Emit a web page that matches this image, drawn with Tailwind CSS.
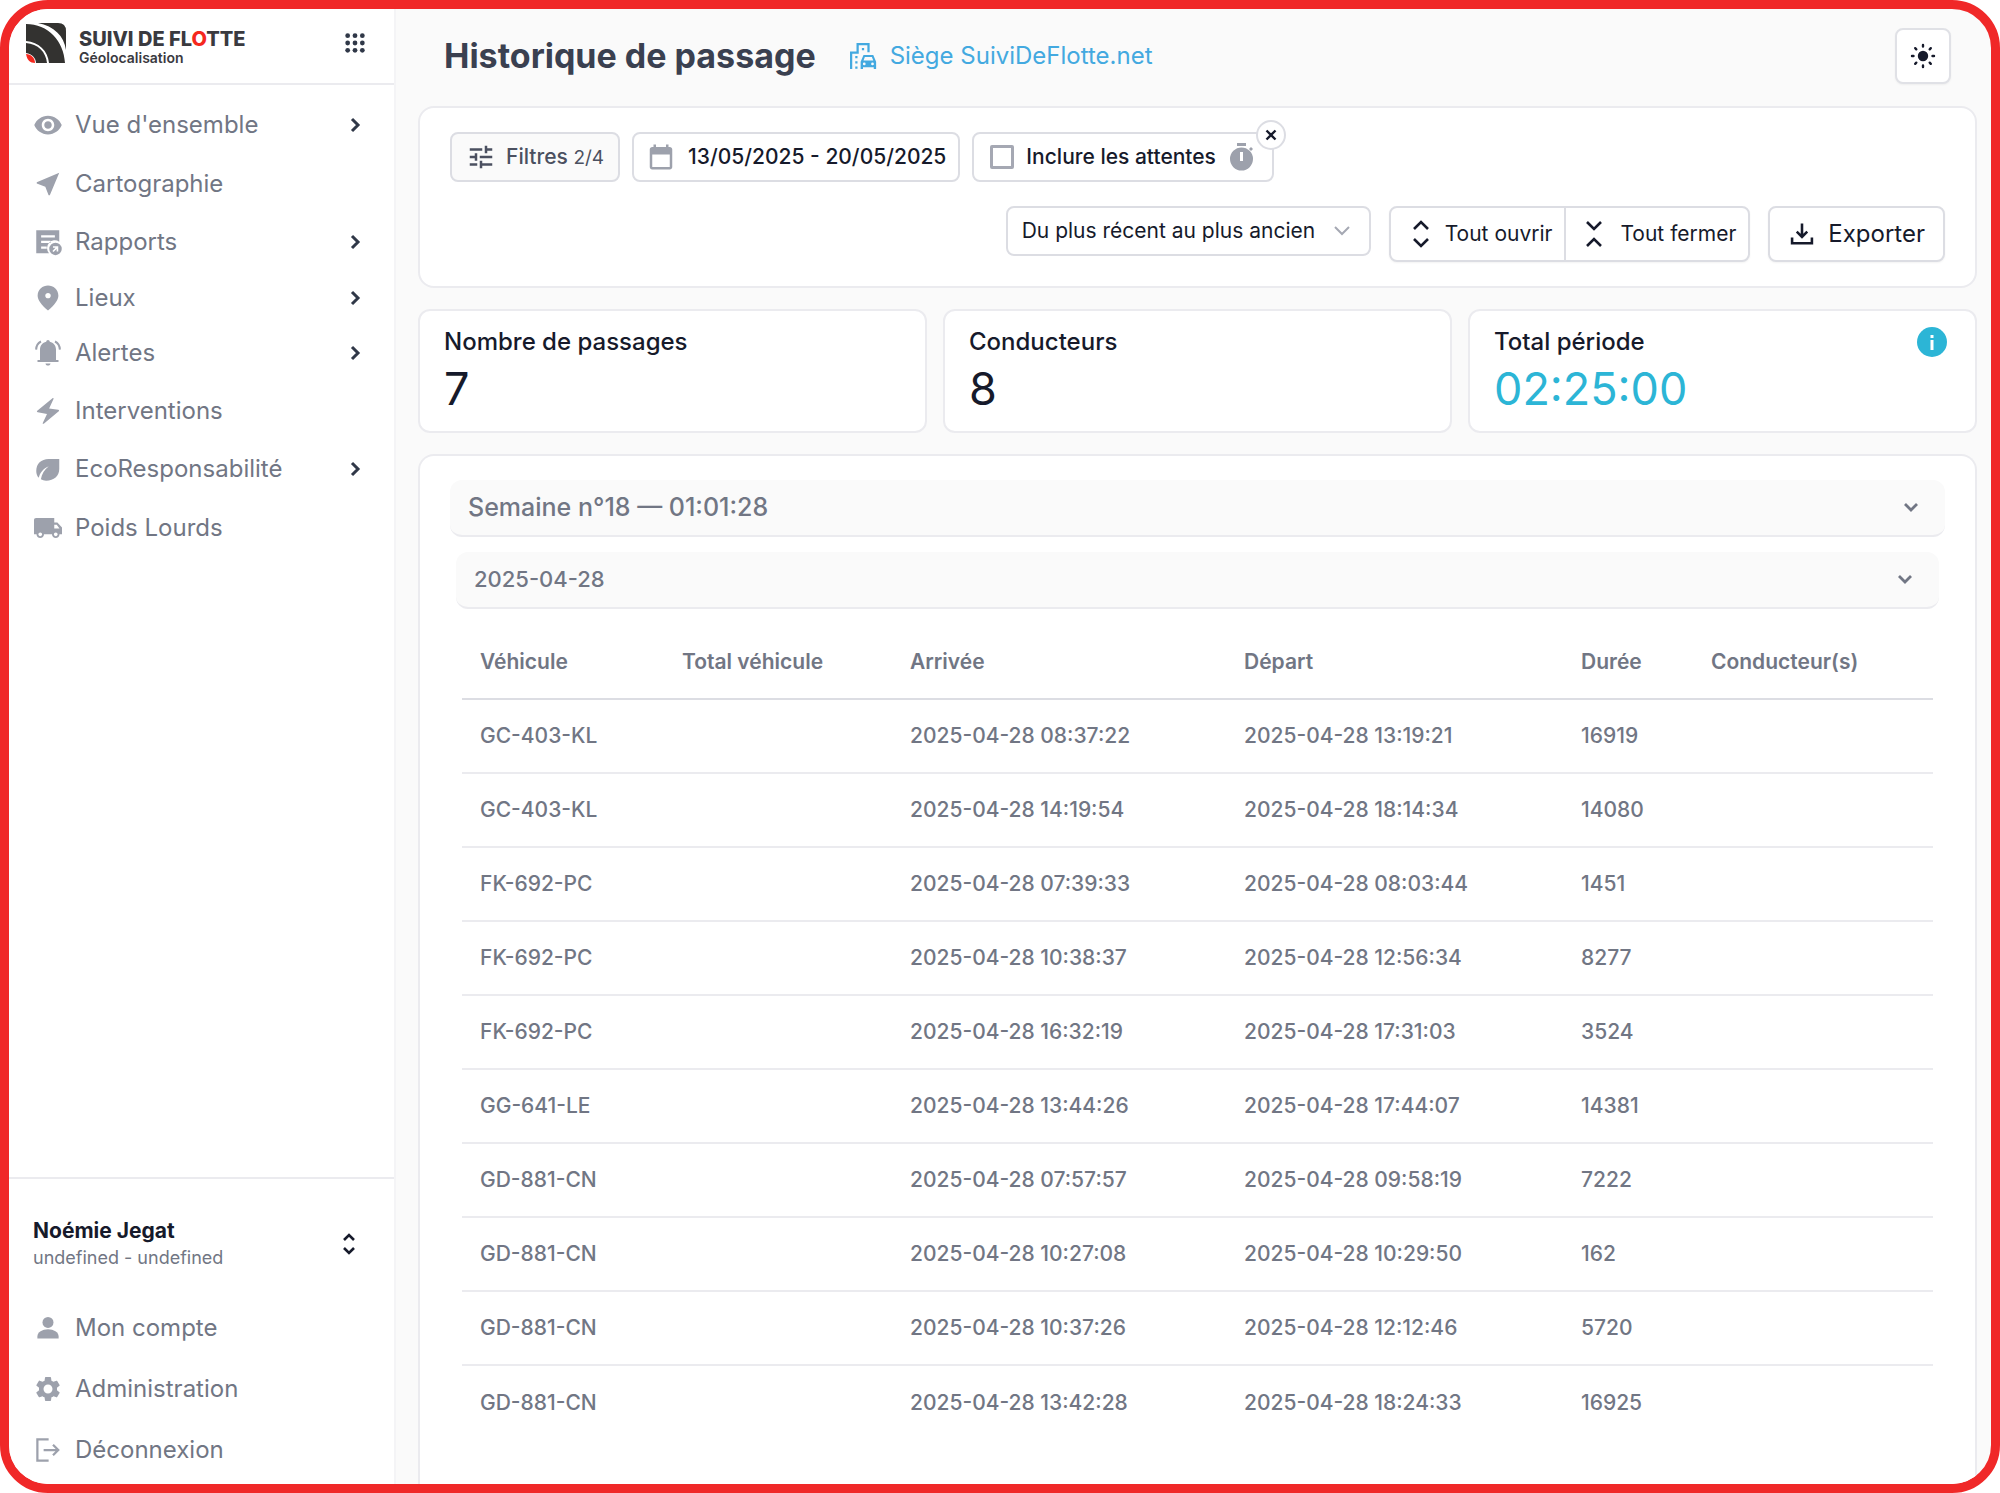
<!DOCTYPE html>
<html lang="fr">
<head>
    <meta charset="UTF-8">
    <meta name="viewport" content="width=device-width, initial-scale=1.0">
    <title>Historique de passage | Suivi de Flotte</title>
    <script src="https://cdn.jsdelivr.net/npm/@tailwindcss/browser@4"></script>
</head>
<body class="h-screen bg-white font-['Inter',sans-serif] text-[#161a2b]">

    <div class="flex h-full overflow-hidden rounded-[48px] border-[9px] border-[#f02828] bg-[#fafafa]">

        <!-- Menu latéral -->
        <aside class="flex w-[387px] shrink-0 flex-col border-r-2 border-[#f4f4f6] bg-white">
            <div class="flex h-[76px] shrink-0 items-center justify-between border-b-2 border-[#ebebef] pb-1.5 pl-4 pr-7">
                <a href="#" class="flex items-center gap-3">
                    <svg class="size-[42px]" viewBox="0 0 42 42">
                        <path d="M13 1h20q8 0 8 8v19C39 14 29 4 13 1z" fill="#333230"/>
                        <path d="M1 2c22 0 38 17 39 39H24C23 29 14 20 1 19z" fill="#333230"/>
                        <path d="M1 21c12 1 20 9 21 20H11C11 36 7 32 1 31z" fill="#333230"/>
                        <path d="M1 32c5 0 9 4 9 9-5 0-8-3-9-9z" fill="#f5281e"/>
                    </svg>
                    <span class="flex flex-col pt-2.5">
                        <span class="text-[20px] font-extrabold leading-[20px] text-[#3a3a3f]">SUIVI DE FL<span class="text-[#f5281e]">O</span>TTE</span>
                        <span class="text-[14px] font-semibold leading-[18px] text-[#3a3a3f]">Géolocalisation</span>
                    </span>
                </a>
                <button type="button" aria-label="Applications">
                    <svg class="size-[22px] text-[#303848]" viewBox="0 0 24 24" fill="currentColor">
                        <circle cx="4" cy="4" r="2.6"/><circle cx="12" cy="4" r="2.6"/><circle cx="20" cy="4" r="2.6"/>
                        <circle cx="4" cy="12" r="2.6"/><circle cx="12" cy="12" r="2.6"/><circle cx="20" cy="12" r="2.6"/>
                        <circle cx="4" cy="20" r="2.6"/><circle cx="12" cy="20" r="2.6"/><circle cx="20" cy="20" r="2.6"/>
                    </svg>
                </button>
            </div>

            <nav class="flex flex-col pt-3 text-[24px] text-[#717684]">
                <a href="#" class="flex h-[56px] items-center gap-3 pl-6 pr-[30px]">
                    <svg class="size-[30px] text-[#9da1ac]" viewBox="0 0 24 24" fill="currentColor"><path d="M12 4.5C7 4.5 2.73 7.61 1 12c1.73 4.39 6 7.5 11 7.5s9.27-3.11 11-7.5c-1.73-4.39-6-7.5-11-7.5M12 17c-2.76 0-5-2.24-5-5s2.24-5 5-5 5 2.24 5 5-2.24 5-5 5m0-8c-1.66 0-3 1.34-3 3s1.34 3 3 3 3-1.34 3-3-1.34-3-3-3"/></svg>
                    <span class="grow">Vue d'ensemble</span>
                    <svg class="size-[18px] text-[#303848]" viewBox="0 0 18 18" fill="none" stroke="currentColor" stroke-width="3"><path d="M6 3l6 6-6 6"/></svg>
                </a>
                <a href="#" class="flex h-[61px] items-center gap-3 pl-6 pr-[30px]">
                    <svg class="size-[30px] text-[#9da1ac]" viewBox="0 0 24 24" fill="currentColor"><path d="M21 3 3 10.53v.98l6.84 2.65L12.48 21h.98z"/></svg>
                    <span class="grow">Cartographie</span>
                </a>
                <a href="#" class="flex h-[56px] items-center gap-3 pl-6 pr-[30px]">
                    <svg class="size-[30px] text-[#9da1ac]" viewBox="0 0 24 24" fill="currentColor">
                        <path fill-rule="evenodd" d="M2.6 2.5h18.4v9.3a6.2 6.2 0 0 0-8.2 9.2H2.6zM6.5 6.5v1.8h11V6.5zM6.5 11v1.8h7.5V11zM6.5 15.5v1.8H11v-1.8z"/>
                        <path fill-rule="evenodd" d="M18 12.5a5 5 0 1 0 0 10 5 5 0 0 0 0-10zM16 15.3h4.2v4.2h-1.3v-2l-2.5 2.5-.9-.9 2.5-2.5h-2z"/>
                    </svg>
                    <span class="grow">Rapports</span>
                    <svg class="size-[18px] text-[#303848]" viewBox="0 0 18 18" fill="none" stroke="currentColor" stroke-width="3"><path d="M6 3l6 6-6 6"/></svg>
                </a>
                <a href="#" class="flex h-[55px] items-center gap-3 pl-6 pr-[30px]">
                    <svg class="size-[30px] text-[#9da1ac]" viewBox="0 0 24 24" fill="currentColor"><path d="M12 2c-4.2 0-8.3 3.22-8.3 8.2 0 3.32 2.97 7.25 8.3 11.8 5.33-4.55 8.3-8.48 8.3-11.8C20.3 5.22 16.2 2 12 2m0 10.2c-1.2 0-2.2-.9-2.2-2.1s1-2.1 2.2-2.1 2.2.9 2.2 2.1-1 2.1-2.2 2.1"/></svg>
                    <span class="grow">Lieux</span>
                    <svg class="size-[18px] text-[#303848]" viewBox="0 0 18 18" fill="none" stroke="currentColor" stroke-width="3"><path d="M6 3l6 6-6 6"/></svg>
                </a>
                <a href="#" class="flex h-[55px] items-center gap-3 pl-6 pr-[30px]">
                    <svg class="size-[30px] text-[#9da1ac]" viewBox="0 0 24 24" fill="currentColor">
                        <path d="M12 1.5c.8 0 1.4.6 1.4 1.4 3 .6 5 3 5 6.3v8.3h2v1.7H3.6v-1.7h2V9.2c0-3.3 2-5.7 5-6.3 0-.8.6-1.4 1.4-1.4zM10 20.3h4c0 1-.9 1.7-2 1.7s-2-.7-2-1.7z"/>
                        <path d="M6.4 2.8C4 4 2.6 6.3 2.5 9.3M17.6 2.8c2.4 1.2 3.8 3.5 3.9 6.5" fill="none" stroke="currentColor" stroke-width="1.6"/>
                    </svg>
                    <span class="grow">Alertes</span>
                    <svg class="size-[18px] text-[#303848]" viewBox="0 0 18 18" fill="none" stroke="currentColor" stroke-width="3"><path d="M6 3l6 6-6 6"/></svg>
                </a>
                <a href="#" class="flex h-[61px] items-center gap-3 pl-6 pr-[30px]">
                    <svg class="size-[30px] text-[#9da1ac]" viewBox="0 0 24 24" fill="currentColor"><path d="M15.6 1.7 3.4 11.700c-.5.5-.3 1.1.4 1.3l7.4 1.3-3.400 7.2c-.2.6.3 1 .8.6l12-9.900c.5-.5.3-1.1-.4-1.3l-7.3-.9 3.5-7.700c.2-.6-.3-1-.8-.6z"/></svg>
                    <span class="grow">Interventions</span>
                </a>
                <a href="#" class="flex h-[56px] items-center gap-3 pl-6 pr-[30px]">
                    <svg class="size-[30px] text-[#9da1ac]" viewBox="0 0 24 24" fill="currentColor"><path d="M21 4h-8.5C6.5 4 2.6 8 2.6 13.5c0 2.2.7 4.2 2 5.5 1-4.3 3.6-7.5 8-9.3-3.5 2.8-5.6 6.2-6.3 10.5 1.2.7 2.6 1.1 4.2 1.1C16.8 21.3 21 17.6 21 12z"/></svg>
                    <span class="grow">EcoResponsabilité</span>
                    <svg class="size-[18px] text-[#303848]" viewBox="0 0 18 18" fill="none" stroke="currentColor" stroke-width="3"><path d="M6 3l6 6-6 6"/></svg>
                </a>
                <a href="#" class="flex h-[61px] items-center gap-3 pl-6 pr-[30px]">
                    <svg class="size-[30px] text-[#9da1ac]" viewBox="0 0 24 24" fill="currentColor"><path d="M19.5 7.5H17V4H2.5C1.4 4 .8 4.6.8 5.7V17h2c0 1.66 1.34 3 3 3s3-1.34 3-3h6.4c0 1.66 1.34 3 3 3s3-1.34 3-3h2v-5.5zM5.8 18.5c-.83 0-1.5-.67-1.5-1.5s.67-1.5 1.5-1.5 1.5.67 1.5 1.5-.67 1.5-1.5 1.5M19 9.3l2.2 3H17v-3zm-.8 9.2c-.83 0-1.5-.67-1.5-1.5s.67-1.5 1.5-1.5 1.5.67 1.5 1.5-.67 1.5-1.5 1.5"/></svg>
                    <span class="grow">Poids Lourds</span>
                </a>
            </nav>

            <!-- Compte utilisateur -->
            <div class="mt-auto border-t-2 border-[#ebebef] pb-1 pt-[38px]">
                <button type="button" class="flex w-full items-center justify-between pl-6 pr-9 text-left">
                    <span class="flex flex-col">
                        <span class="text-[21px] font-bold leading-[28px]">Noémie Jegat</span>
                        <span class="text-[18px] leading-[26px] text-[#717684]">undefined - undefined</span>
                    </span>
                    <svg class="h-[24px] w-[18px]" viewBox="0 0 18 24" fill="none" stroke="currentColor" stroke-width="2.6"><path d="M4 8l5-5 5 5M4 16l5 5 5-5"/></svg>
                </button>
                <nav class="flex flex-col pt-[26px] text-[24px] text-[#717684]">
                    <a href="#" class="flex h-[61px] items-center gap-3 pl-6 pr-[30px]">
                        <svg class="size-[30px] text-[#9da1ac]" viewBox="0 0 24 24" fill="currentColor"><circle cx="12" cy="7.5" r="4.4"/><path d="M3.5 20.3v-1.6c0-3.2 4-5.7 8.5-5.7s8.5 2.5 8.5 5.7v1.6z"/></svg>
                        <span>Mon compte</span>
                    </a>
                    <a href="#" class="flex h-[61px] items-center gap-3 pl-6 pr-[30px]">
                        <svg class="size-[30px] text-[#9da1ac]" viewBox="0 0 24 24" fill="currentColor"><path d="M19.14 12.94c.04-.3.06-.61.06-.94 0-.32-.02-.64-.07-.94l2.03-1.58c.18-.14.23-.41.12-.61l-1.92-3.32c-.12-.22-.37-.29-.59-.22l-2.39.96c-.5-.38-1.03-.7-1.62-.94l-.36-2.54c-.04-.24-.24-.41-.48-.41h-3.84c-.24 0-.43.17-.47.41l-.36 2.54c-.59.24-1.13.57-1.62.94l-2.39-.96c-.22-.08-.47 0-.59.22L2.74 8.87c-.12.21-.08.47.12.61l2.03 1.58c-.05.3-.09.63-.09.94s.02.64.07.94l-2.03 1.58c-.18.14-.23.41-.12.61l1.92 3.32c.12.22.37.29.59.22l2.39-.96c.5.38 1.03.7 1.62.94l.36 2.54c.05.24.24.41.48.41h3.84c.24 0 .44-.17.47-.41l.36-2.54c.59-.24 1.13-.56 1.62-.94l2.39.96c.22.08.47 0 .59-.22l1.92-3.32c.12-.22.07-.47-.12-.61zM12 15.6c-1.98 0-3.6-1.62-3.6-3.6s1.62-3.6 3.6-3.6 3.6 1.62 3.6 3.6-1.62 3.6-3.6 3.6"/></svg>
                        <span>Administration</span>
                    </a>
                    <a href="#" class="flex h-[61px] items-center gap-3 pl-6 pr-[30px]">
                        <svg class="size-[30px] text-[#9da1ac]" viewBox="0 0 24 24" fill="none" stroke="currentColor" stroke-width="1.8"><path d="M12.5 3.5h-9v17h9M8.5 12H20M16 7.8l4.2 4.2-4.2 4.2"/></svg>
                        <span>Déconnexion</span>
                    </a>
                </nav>
            </div>
        </aside>

        <main class="flex min-w-0 grow flex-col pl-[22px] pr-3.5">
            <header class="flex h-[97px] shrink-0 items-center justify-between px-[26px] pb-1">
                <div class="flex items-center gap-8">
                    <h1 class="text-[34px] font-bold text-[#3a4050]">Historique de passage</h1>
                    <a href="#" class="flex items-center gap-3 text-[24px] text-[#43a9e0]">
                        <svg class="size-[30px]" viewBox="0 0 24 24" fill="currentColor">
                            <path d="M2.5 22.4V9.2h5.2V2.5h8.7V9" fill="none" stroke="currentColor" stroke-width="1.8"/>
                            <path d="M11.1 5.5h1.8v1.8h-1.8zM5.8 12h1.8v1.8H5.8zM5.8 16.2h1.8V18H5.8zM5.8 20.4h1.8v1.8H5.8z"/>
                            <path fill-rule="evenodd" d="M12.4 11.2h7.8l2.3 5.3v5.9h-1.9v-1.5H12v1.5h-1.9v-5.9zM13.5 12.8l-1.1 2.7h7.8l-1.1-2.7zM13 17.2a1.1 1.1 0 1 0 0 2.2 1.1 1.1 0 0 0 0-2.2zM19.6 17.2a1.1 1.1 0 1 0 0 2.2 1.1 1.1 0 0 0 0-2.2z"/>
                        </svg>
                        Siège SuiviDeFlotte.net
                    </a>
                </div>
                <button type="button" aria-label="Thème clair" class="flex size-[56px] items-center justify-center rounded-lg border-2 border-[#e0e1e6] bg-white shadow-xs">
                    <svg class="size-[26px]" viewBox="0 0 26 26" fill="currentColor" stroke="currentColor" stroke-width="2.4" stroke-linecap="round">
                        <circle cx="13" cy="13" r="4"/>
                        <path d="M13 2v1.5M13 22.5V24M2 13h1.5M22.5 13H24M5.2 5.2l1.1 1.1M19.7 19.7l1.1 1.1M5.2 20.8l1.1-1.1M19.7 6.3l1.1-1.1"/>
                    </svg>
                </button>
            </header>

            <!-- Filtres -->
            <section class="flex shrink-0 flex-col gap-6 rounded-2xl border-2 border-[#ebebef] bg-white px-[30px] py-6">
                <div class="flex gap-3">
                    <button type="button" class="flex h-[50px] items-center gap-2.5 rounded-lg border-2 border-[#dcdde3] bg-[#fafafa] px-3.5 text-[21px] font-medium text-[#4b5060]">
                        <svg class="size-[30px]" viewBox="0 0 24 24" fill="currentColor"><path d="M3 17v2h6v-2zM3 5v2h10V5zm10 16v-2h8v-2h-8v-2h-2v6zM7 9v2H3v2h4v2h2V9zm14 4v-2H11v2zm-6-4h2V7h4V5h-4V3h-2z"/></svg>
                        <span>Filtres <span class="text-[19px] font-normal">2/4</span></span>
                    </button>
                    <button type="button" class="flex h-[50px] items-center gap-3 rounded-lg border-2 border-[#dcdde3] bg-white px-3 text-[21px] font-medium">
                        <svg class="size-[30px] text-[#9da1ac]" viewBox="0 0 24 24" fill="currentColor"><path d="M19 4h-1V2h-2v2H8V2H6v2H5c-1.11 0-2 .9-2 2v14c0 1.1.89 2 2 2h14c1.1 0 2-.9 2-2V6c0-1.1-.9-2-2-2m0 16H5V10h14z"/></svg>
                        13/05/2025 - 20/05/2025
                    </button>
                    <div class="relative flex h-[50px] items-center gap-3 rounded-lg border-2 border-[#dcdde3] bg-white px-4 text-[21px] font-medium">
                        <input id="attentes" type="checkbox" class="size-[24px] appearance-none rounded-xs border-[3px] border-[#a5a8b3] bg-white">
                        <label for="attentes">Inclure les attentes</label>
                        <svg class="size-[28px] text-[#9da1ac]" viewBox="0 0 28 28" fill="currentColor"><path fill-rule="evenodd" d="M9 0h9v3H9zM13.5 4.5a11.5 11.5 0 1 0 0 23 11.5 11.5 0 0 0 0-23zM12 9h3v9h-3zM21 6l2-2 2 2-2 2z"/></svg>
                        <button type="button" aria-label="Retirer le filtre" class="absolute -right-3.5 -top-3.5 flex size-[30px] items-center justify-center rounded-full border-2 border-[#dcdde3] bg-white">
                            <svg class="size-[12px]" viewBox="0 0 12 12" fill="none" stroke="currentColor" stroke-width="2.4"><path d="M1.5 1.5l9 9M10.5 1.5l-9 9"/></svg>
                        </button>
                    </div>
                </div>
                <div class="flex items-start justify-end gap-[18px]">
                    <div class="relative">
                        <select aria-label="Tri" class="h-[50px] w-[365px] appearance-none rounded-lg border-2 border-[#dcdde3] bg-white pl-3.5 pr-12 text-[21px]">
                            <option>Du plus récent au plus ancien</option>
                            <option>Du plus ancien au plus récent</option>
                        </select>
                        <svg class="pointer-events-none absolute right-5 top-4 size-[18px] text-[#a5a8b3]" viewBox="0 0 18 18" fill="none" stroke="currentColor" stroke-width="2"><path d="M2 5l7 7 7-7"/></svg>
                    </div>
                    <div class="flex h-[56px] rounded-lg border-2 border-[#dcdde3] bg-white text-[21px] shadow-xs">
                        <button type="button" class="flex items-center gap-2.5 border-r-2 border-[#dcdde3] pl-4 pr-3">
                            <svg class="size-[28px]" viewBox="0 0 28 28" fill="none" stroke="currentColor" stroke-width="2.6"><path d="M7 9l7-7 7 7M7 19l7 7 7-7"/></svg>
                            Tout ouvrir
                        </button>
                        <button type="button" class="flex items-center gap-3 pl-3.5 pr-3">
                            <svg class="size-[28px]" viewBox="0 0 28 28" fill="none" stroke="currentColor" stroke-width="2.6"><path d="M7 2l7 7 7-7M7 26l7-7 7 7"/></svg>
                            Tout fermer
                        </button>
                    </div>
                    <button type="button" class="flex h-[56px] items-center gap-3 rounded-lg border-2 border-[#dcdde3] bg-white px-[18px] text-[24px] shadow-xs">
                        <svg class="size-[28px]" viewBox="0 0 24 24" fill="none" stroke="currentColor" stroke-width="2.2"><path d="M12 3v11M7.5 10l4.5 4.5 4.5-4.5M3.5 15v5h17v-5"/></svg>
                        Exporter
                    </button>
                </div>
            </section>

            <!-- Indicateurs -->
            <section class="mt-[21px] grid shrink-0 grid-cols-3 gap-4">
                <div class="h-[124px] rounded-xl border-2 border-[#ebebef] bg-white px-6 py-4">
                    <h2 class="text-[24px] font-medium leading-[30px]">Nombre de passages</h2>
                    <p class="text-[45px] leading-[64px]">7</p>
                </div>
                <div class="h-[124px] rounded-xl border-2 border-[#ebebef] bg-white px-6 py-4">
                    <h2 class="text-[24px] font-medium leading-[30px]">Conducteurs</h2>
                    <p class="text-[45px] leading-[64px]">8</p>
                </div>
                <div class="flex h-[124px] items-start justify-between rounded-xl border-2 border-[#ebebef] bg-white py-4 pl-6 pr-7">
                    <div>
                        <h2 class="text-[24px] font-medium leading-[30px]">Total période</h2>
                        <p class="text-[45px] leading-[64px] text-[#2cb5d6]">02:25:00</p>
                    </div>
                    <button type="button" aria-label="Informations">
                        <svg class="size-[30px]" viewBox="0 0 30 30"><circle cx="15" cy="15" r="15" fill="#2cb5d6"/><path d="M13.5 8h3v3h-3zM13.5 13h3v10h-3z" fill="#fff"/></svg>
                    </button>
                </div>
            </section>

            <!-- Passages par semaine et par jour -->
            <section class="mt-[21px] grow rounded-t-2xl border-2 border-b-0 border-[#ebebef] bg-white px-[30px] pt-6">
                <button type="button" class="flex h-[57px] w-full items-center justify-between rounded-xl border-b-2 border-[#ebebef] bg-[#fafafa] pl-[18px] pr-6 text-[25px] font-medium text-[#717684]">
                    Semaine n°18 — 01:01:28
                    <svg class="size-[18px]" viewBox="0 0 18 18" fill="none" stroke="currentColor" stroke-width="2.8"><path d="M2 5l6 6 6-6"/></svg>
                </button>
                <div class="px-1.5 pt-[15px]">
                    <button type="button" class="flex h-[57px] w-full items-center justify-between rounded-xl border-b-2 border-[#ebebef] bg-[#fafafa] pl-[18px] pr-6 text-[22px] font-medium text-[#717684]">
                        2025-04-28
                        <svg class="size-[18px]" viewBox="0 0 18 18" fill="none" stroke="currentColor" stroke-width="2.8"><path d="M2 5l6 6 6-6"/></svg>
                    </button>
                    <div class="px-1.5 pt-4">
                        <table class="w-full table-fixed text-left text-[21px] font-medium text-[#717684]">
                            <thead>
                                <tr class="h-[74px] border-b-2 border-[#dcdde3]">
                                    <th class="w-[202px] pl-[18px] font-semibold">Véhicule</th>
                                    <th class="w-[228px] pl-[18px] font-semibold">Total véhicule</th>
                                    <th class="w-[334px] pl-[18px] font-semibold">Arrivée</th>
                                    <th class="w-[337px] pl-[18px] font-semibold">Départ</th>
                                    <th class="w-[130px] pl-[18px] font-semibold">Durée</th>
                                    <th class="pl-[18px] font-semibold">Conducteur(s)</th>
                                </tr>
                            </thead>
                            <tbody id="passages"></tbody>
                        </table>
                    </div>
                </div>
            </section>
        </main>
    </div>

    <script>
        const passages = [
            ['GC-403-KL', '08:37:22', '13:19:21', 16919],
            ['GC-403-KL', '14:19:54', '18:14:34', 14080],
            ['FK-692-PC', '07:39:33', '08:03:44', 1451],
            ['FK-692-PC', '10:38:37', '12:56:34', 8277],
            ['FK-692-PC', '16:32:19', '17:31:03', 3524],
            ['GG-641-LE', '13:44:26', '17:44:07', 14381],
            ['GD-881-CN', '07:57:57', '09:58:19', 7222],
            ['GD-881-CN', '10:27:08', '10:29:50', 162],
            ['GD-881-CN', '10:37:26', '12:12:46', 5720],
            ['GD-881-CN', '13:42:28', '18:24:33', 16925]
        ];

        document.getElementById('passages').innerHTML = passages.map(([vehicule, arrivee, depart, duree]) => `
            <tr class="h-[74px] border-b-2 border-[#ebebef] last:border-b-0">
                <td class="pl-[18px]">${vehicule}</td>
                <td class="pl-[18px]"></td>
                <td class="pl-[18px]">2025-04-28 ${arrivee}</td>
                <td class="pl-[18px]">2025-04-28 ${depart}</td>
                <td class="pl-[18px]">${duree}</td>
                <td class="pl-[18px]"></td>
            </tr>`).join('');
    </script>

</body>
</html>
